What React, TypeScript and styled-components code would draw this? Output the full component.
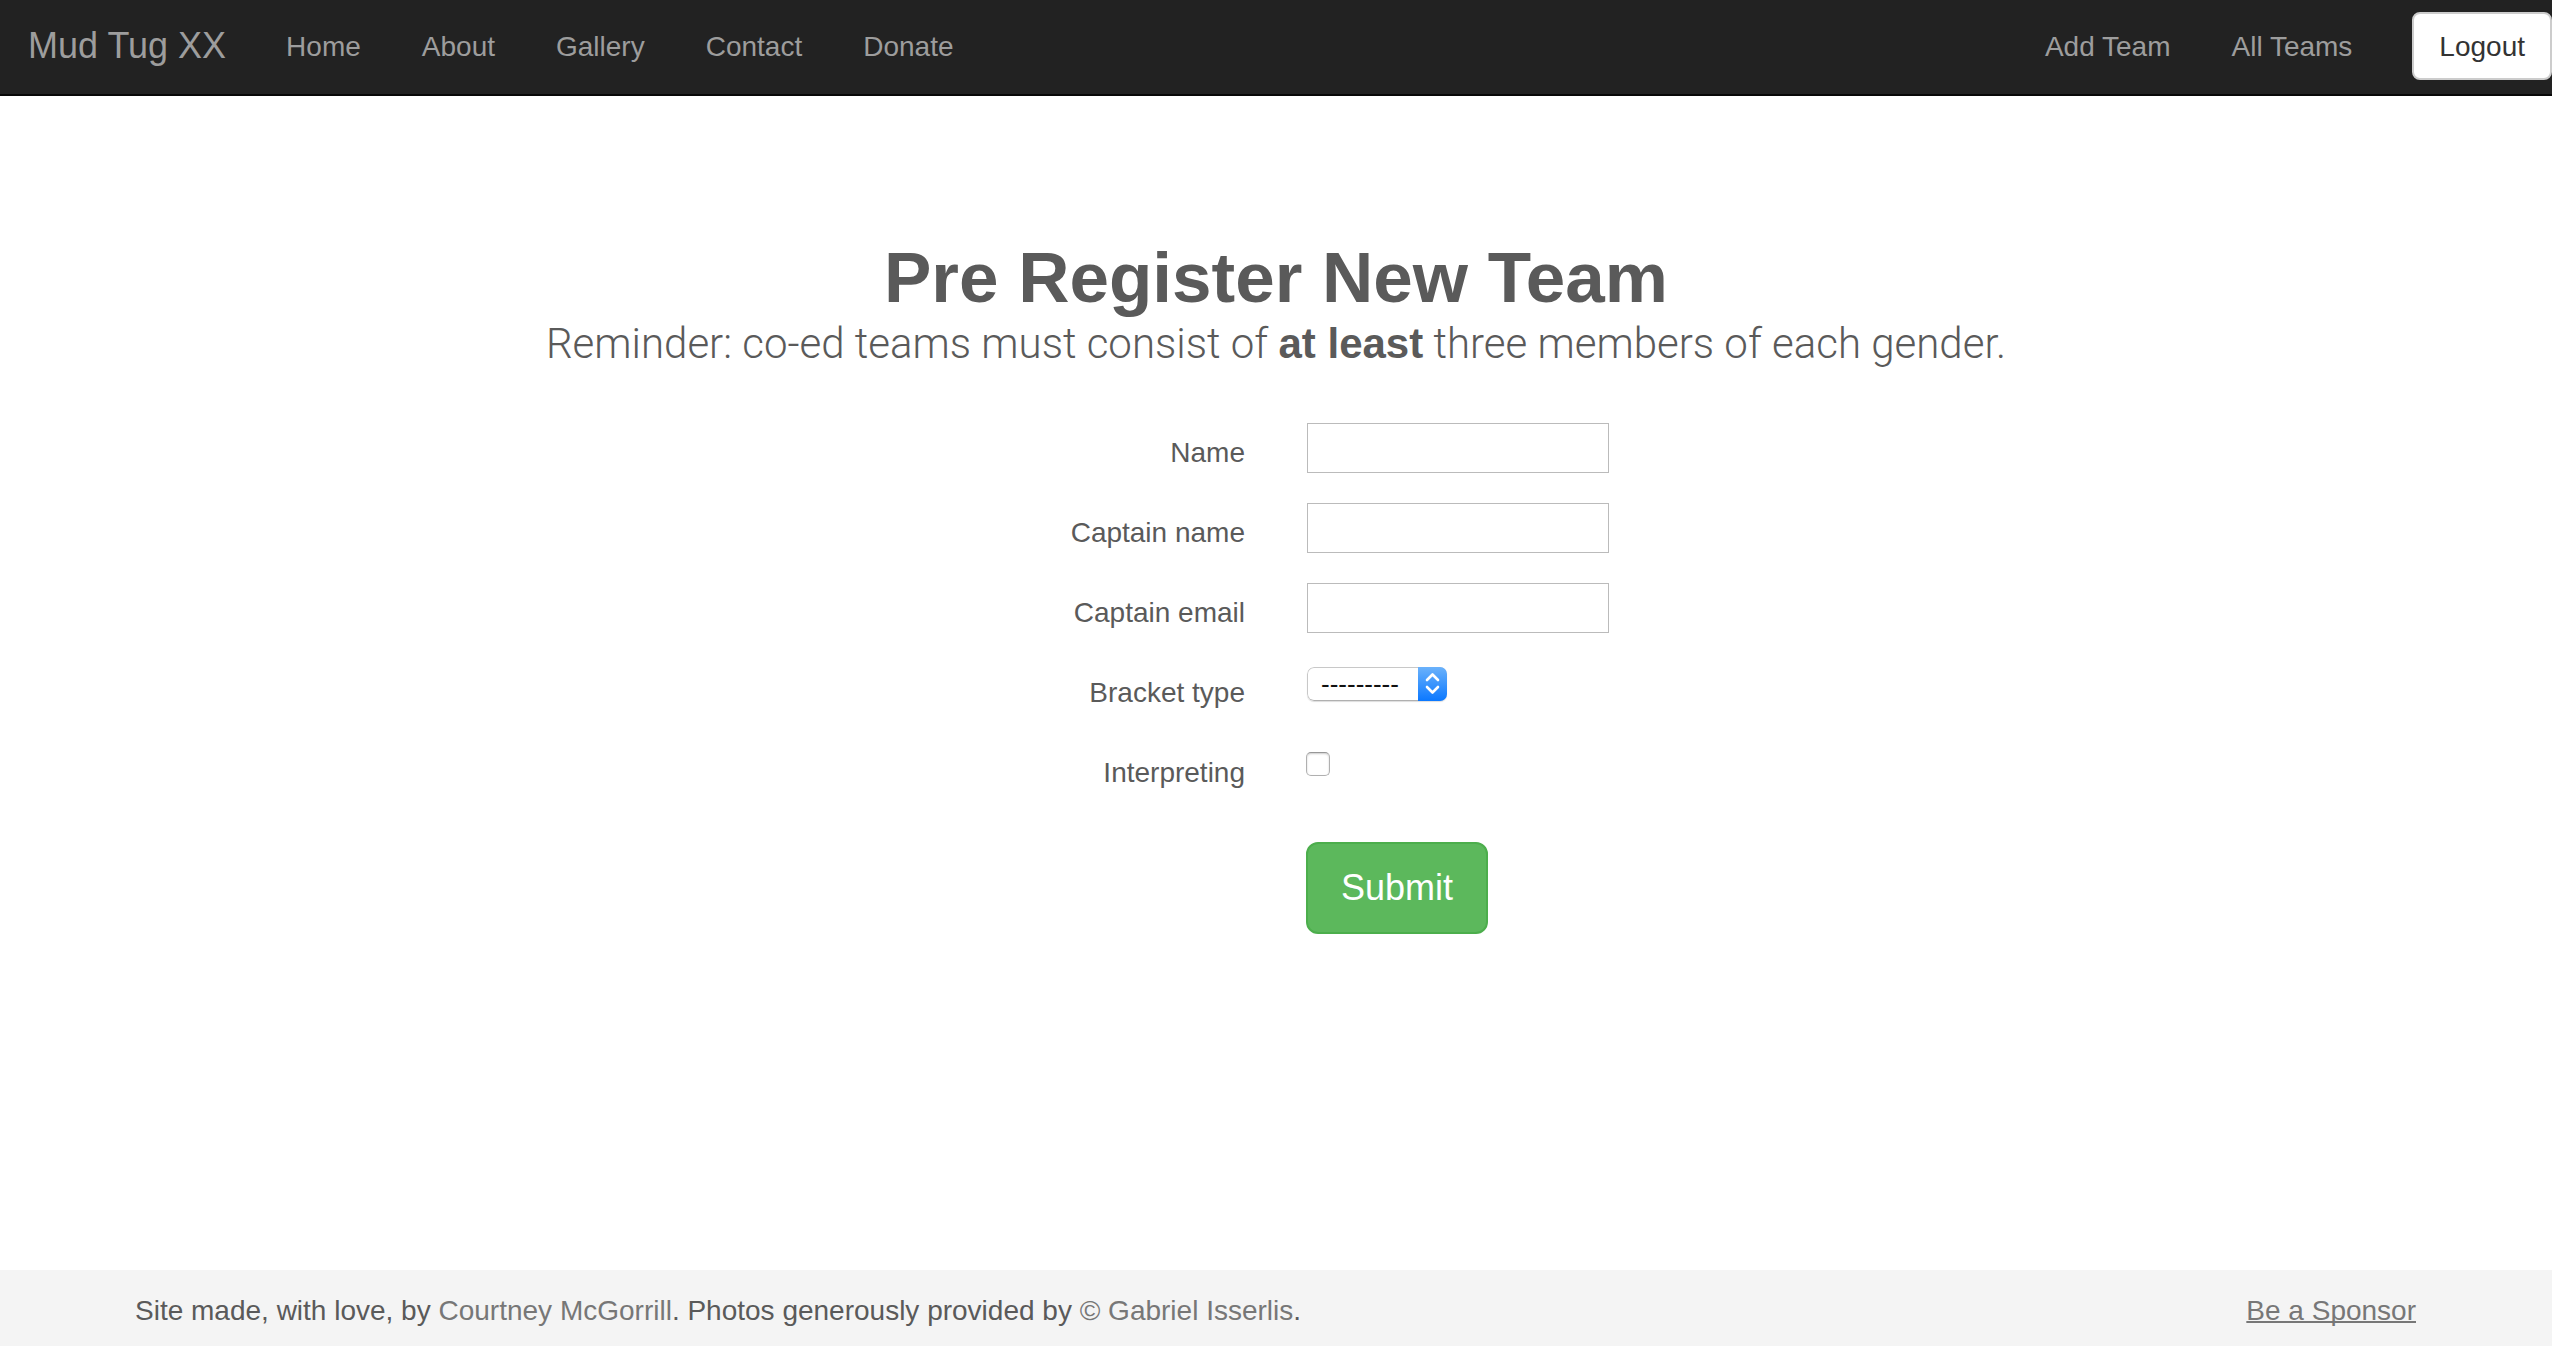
import React from "react";
import styled, { createGlobalStyle } from "styled-components";

const GlobalStyle = createGlobalStyle`
  *, *::before, *::after { box-sizing: border-box; }
  body {
    margin: 0;
    background: #fff;
    color: #5a5a5a;
    font-family: "Helvetica Neue", "Liberation Sans", Arial, sans-serif;
    font-size: 28px;
    line-height: 40px;
  }
`;

const Page = styled.div`
  display: flex;
  flex-direction: column;
  min-height: 100vh;
`;

const Navbar = styled.nav`
  display: flex;
  align-items: flex-start;
  justify-content: space-between;
  padding-top: 12px;
  height: 96px;
  background: #222;
  border-bottom: 2px solid #080808;
`;

const NavGroup = styled.div`
  display: flex;
  align-items: flex-start;
`;

const NavLink = styled.a`
  padding: 15px 30px 13px 31px;
  color: #9d9d9d;
  text-decoration: none;
  white-space: nowrap;
`;

const Brand = styled(NavLink)`
  padding: 14px 29px 14px 28px;
  font-size: 36px;
`;

const LogoutButton = styled.button`
  margin-left: 30px;
  padding: 13px 25px 11px;
  border: 2px solid #ccc;
  border-radius: 8px;
  background: #fff;
  color: #333;
  font: inherit;
`;

const Main = styled.main`
  flex: 1;
  padding: 146px 30px 60px;
  text-align: center;
`;

const Title = styled.h1`
  margin: 0;
  font-size: 71px;
  font-weight: 700;
  line-height: 72px;
`;

const Lead = styled.p`
  margin: 0 0 49px;
  font-family: Roboto, "Liberation Sans", sans-serif;
  font-size: 42px;
  font-weight: 300;
  line-height: 60px;
`;

const Strong = styled.strong`
  font-family: "Liberation Sans", Arial, sans-serif;
  font-weight: 700;
`;

const Form = styled.form`
  display: grid;
  grid-template-columns: 1fr 1fr;
  grid-auto-rows: 80px;
  column-gap: 60px;
  text-align: left;
`;

const Label = styled.label`
  padding: 10px 1px 0 0;
  text-align: right;
`;

const Field = styled.div<{ $top?: number }>`
  grid-column: 2;
  padding-top: ${(p) => p.$top ?? 0}px;
  line-height: 0;
`;

const TextInput = styled.input`
  width: 302px;
  height: 50px;
  margin-left: 1px;
  padding: 4px 8px;
  border: 1px solid #bbb;
  border-radius: 0;
  background: #fff;
  color: #333;
  font: inherit;
`;

const SelectBox = styled.div`
  display: inline-grid;
  grid-template-columns: 111px 29px;
  height: 34px;
  margin-left: 1px;
  border-radius: 7px;
  overflow: hidden;
  box-shadow: 0 1px 1px #ddd;
`;

const Select = styled.select`
  grid-area: 1 / 1 / 2 / 3;
  width: 100%;
  height: 34px;
  padding: 0 32px 0 13px;
  appearance: none;
  border: 1px solid #c8c8c8;
  border-bottom-color: #b0b0b0;
  border-radius: 7px;
  background: #fff;
  color: #111;
  font-family: inherit;
  font-size: 26px;
  line-height: 32px;
`;

const SelectArrows = styled.svg`
  grid-area: 1 / 2 / 2 / 3;
  z-index: 1;
  width: 29px;
  height: 34px;
  background: linear-gradient(#6bb2fb, #0b78ff);
  pointer-events: none;
`;

const Checkbox = styled.input`
  width: 24px;
  height: 24px;
  margin: 0;
  appearance: none;
  border: 1px solid #b0b0b0;
  border-top-color: #979797;
  border-radius: 5px;
  background: #fff;
  box-shadow: inset 0 1px 2px #ccc;

  &:checked { background: #0b78ff; }
`;

const SubmitButton = styled.button`
  padding: 20px 33px;
  border: 2px solid #4cae4c;
  border-radius: 12px;
  background: #5cb85c;
  color: #fff;
  font-family: inherit;
  font-size: 36px;
  line-height: 48px;
`;

const Footer = styled.footer`
  display: flex;
  justify-content: space-between;
  padding: 21px 136px 15px 135px;
  background: #f4f4f4;
`;

const FooterText = styled.p`
  margin: 0;
`;

const FooterLink = styled.a<{ $underlined?: boolean }>`
  color: #777;
  text-decoration: ${(p) => (p.$underlined ? "underline" : "none")};
  text-decoration-thickness: 2px;
  text-decoration-skip-ink: none;
`;

const siteLinks = ["Home", "About", "Gallery", "Contact", "Donate"];
const teamLinks = ["Add Team", "All Teams"];
const textFields = [
  { id: "name", label: "Name", type: "text" },
  { id: "captain-name", label: "Captain name", type: "text" },
  { id: "captain-email", label: "Captain email", type: "email" },
];

export default function App() {
  return (
    <Page>
      <GlobalStyle />
      <Navbar>
        <NavGroup>
          <Brand href="#">Mud Tug XX</Brand>
          {siteLinks.map((text) => (
            <NavLink key={text} href="#">{text}</NavLink>
          ))}
        </NavGroup>
        <NavGroup>
          {teamLinks.map((text) => (
            <NavLink key={text} href="#">{text}</NavLink>
          ))}
          <LogoutButton type="button">Logout</LogoutButton>
        </NavGroup>
      </Navbar>
      <Main>
        <Title>Pre Register New Team</Title>
        <Lead>
          Reminder: co-ed teams must consist of <Strong>at least</Strong> three members of each gender.
        </Lead>
        <Form onSubmit={(e) => e.preventDefault()}>
          {textFields.map((field) => (
            <React.Fragment key={field.id}>
              <Label htmlFor={field.id}>{field.label}</Label>
              <Field>
                <TextInput id={field.id} type={field.type} />
              </Field>
            </React.Fragment>
          ))}
          <Label htmlFor="bracket">Bracket type</Label>
          <Field $top={4}>
            <SelectBox>
              <Select id="bracket" defaultValue="">
                <option value="">---------</option>
              </Select>
              <SelectArrows viewBox="0 0 29 34" aria-hidden="true">
                <path
                  d="M9 13 14.5 7.5 20 13M9 20 14.5 25.5 20 20"
                  fill="none"
                  stroke="#fff"
                  strokeWidth="2.6"
                  strokeLinecap="round"
                  strokeLinejoin="round"
                />
              </SelectArrows>
            </SelectBox>
          </Field>
          <Label htmlFor="interpreting">Interpreting</Label>
          <Field $top={9}>
            <Checkbox id="interpreting" type="checkbox" />
          </Field>
          <Field $top={19}>
            <SubmitButton type="submit">Submit</SubmitButton>
          </Field>
        </Form>
      </Main>
      <Footer>
        <FooterText>
          Site made, with love, by <FooterLink href="#">Courtney McGorrill</FooterLink>. Photos generously provided by{" "}
          <FooterLink href="#">© Gabriel Isserlis</FooterLink>.
        </FooterText>
        <FooterLink href="#" $underlined>Be a Sponsor</FooterLink>
      </Footer>
    </Page>
  );
}
